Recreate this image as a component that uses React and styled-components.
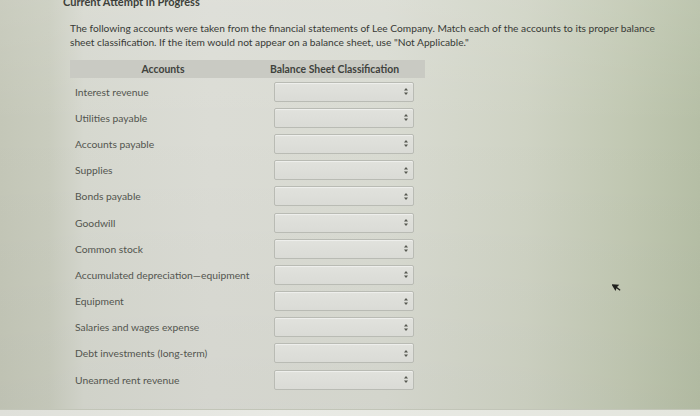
import React from "react";
import styled, { createGlobalStyle } from "styled-components";

const GlobalStyle = createGlobalStyle`
  html, body { margin: 0; padding: 0; }
  body {
    width: 700px;
    height: 416px;
    overflow: hidden;
    font-family: Lato, "Open Sans", sans-serif;
    background:
      linear-gradient(to bottom, rgba(255,255,255,0.10) 0%, rgba(255,255,255,0) 30%, rgba(0,0,0,0.03) 100%),
      linear-gradient(to right, #c4c7b8 0%, #c9ccbe 7%, #d6d8cf 12%, #dbdcd5 30%, #d9dbd2 55%, #cfd3c4 75%, #c1c8b2 90%, #b6bfa6 100%);
  }
`;

const Page = styled.div`
  position: relative;
  height: 416px;
  display: flex;
  flex-direction: column;
`;

const Content = styled.div`
  flex: 1;
  padding-left: 70px;
  display: flex;
  flex-direction: column;
`;

const Title = styled.div`
  margin: -5px 0 0 -7px;
  font-size: 11px;
  font-weight: 700;
  color: #3d3f3a;
  height: 14px;
  line-height: 14px;
`;

const Intro = styled.p`
  margin: 12px 0 0 0;
  width: 600px;
  font-size: 10.2px;
  line-height: 14px;
  color: #383a36;
`;

const Table = styled.div`
  margin-top: 11px;
  width: 355px;
  display: flex;
  flex-direction: column;
`;

const HeaderRow = styled.div`
  display: grid;
  grid-template-columns: 186px 169px;
  height: 18px;
  align-items: center;
  background: #c9cac3;
`;

const HeaderCell = styled.div`
  text-align: center;
  font-size: 10.4px;
  font-weight: 700;
  color: #40423d;
  padding-right: ${(p) => p.$shift || 0}px;
`;

const Row = styled.div`
  display: grid;
  grid-template-columns: 204px 140px;
  align-items: center;
  height: 26.2px;
`;

const FirstRow = styled(Row)`
  margin-top: 0.5px;
`;

const Label = styled.div`
  padding-left: 5px;
  font-size: 10.3px;
  color: #53554f;
  white-space: nowrap;
`;

const Select = styled.div`
  height: 20px;
  box-sizing: border-box;
  border: 1px solid #b9bbb4;
  border-radius: 2px;
  background: linear-gradient(to bottom, #e1e2dd 0%, #dadbd6 100%);
  box-shadow: inset 0 1px 1px rgba(255,255,255,0.5);
  display: flex;
  align-items: center;
  justify-content: flex-end;
  padding-right: 5px;
`;

const BottomBar = styled.div`
  height: 6px;
  background: linear-gradient(to right, #dfe0da, #e9eae5 40%, #e4e6de);
  border-top: 1px solid #c2c5b8;
`;

const Cursor = styled.svg`
  position: absolute;
  left: 612px;
  top: 281px;
`;

const Arrows = () => (
  <svg width="4" height="7" viewBox="0 0 4 7">
    <path d="M2 0 L4 2.6 L0 2.6 Z" fill="#55574f" />
    <path d="M2 7 L4 4.4 L0 4.4 Z" fill="#55574f" />
  </svg>
);

const accounts = [
  "Interest revenue",
  "Utilities payable",
  "Accounts payable",
  "Supplies",
  "Bonds payable",
  "Goodwill",
  "Common stock",
  "Accumulated depreciation\u2014equipment",
  "Equipment",
  "Salaries and wages expense",
  "Debt investments (long-term)",
  "Unearned rent revenue",
];

export default function App() {
  return (
    <>
      <GlobalStyle />
      <Page>
        <Content>
          <Title>Current Attempt in Progress</Title>
          <Intro>
            The following accounts were taken from the financial statements of Lee Company. Match each of the accounts to its proper balance
            sheet classification. If the item would not appear on a balance sheet, use "Not Applicable."
          </Intro>
          <Table>
            <HeaderRow>
              <HeaderCell>Accounts</HeaderCell>
              <HeaderCell $shift={12}>Balance Sheet Classification</HeaderCell>
            </HeaderRow>
            {accounts.map((a, i) => {
              const R = i === 0 ? FirstRow : Row;
              return (
                <R key={a}>
                  <Label>{a}</Label>
                  <Select>
                    <Arrows />
                  </Select>
                </R>
              );
            })}
          </Table>
        </Content>
        <BottomBar />
        <Cursor width="10" height="12" viewBox="0 0 10 12">
          <path d="M1 1 L8 5 L5 6 L7 10 L6 10.6 L4 6.8 L2 9 Z" fill="#1e1f1c" transform="rotate(-25 5 6)" />
        </Cursor>
      </Page>
    </>
  );
}
